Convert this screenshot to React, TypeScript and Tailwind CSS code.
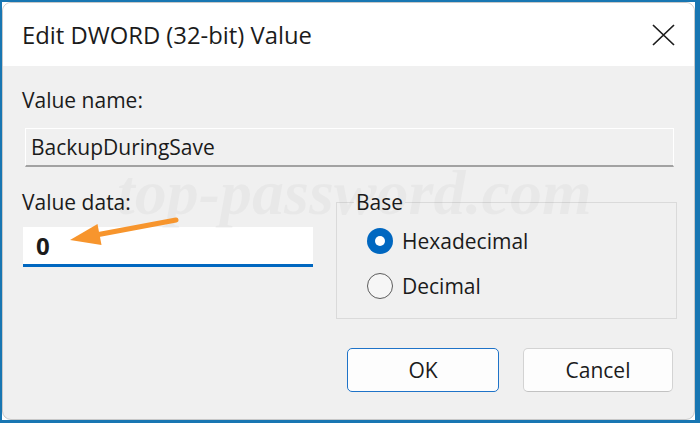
export default function App() {
  return (
    <div className="w-[700px] h-[423px] bg-[#1876b2] pt-[2px] pl-[2px] pr-[5px] pb-[3px] font-['Segoe_UI','Open_Sans',sans-serif] text-[#1b1b1b]">
      <div className="h-full bg-white">
        <div className="relative h-full rounded-[9px] border border-[#c8c8c8] bg-[#f0f0f0] overflow-hidden flex flex-col">
          {/* title bar */}
          <div className="h-[63px] shrink-0 bg-white flex items-center justify-between pl-[19px] pr-[19px]">
            <span className="text-[23.8px] leading-[30px]">Edit DWORD (32-bit) Value</span>
            <svg width="23" height="22" viewBox="0 0 23 22" className="mt-[1px]">
              <path d="M1 1 L22 21 M22 1 L1 21" stroke="#1c1c1c" strokeWidth="1.7" fill="none" />
            </svg>
          </div>

          <div className="flex-1 flex flex-col pl-[19px] pr-[20px] text-[21px] leading-[28px]">
            <div className="mt-[20px]">Value name:</div>
            <div className="mt-[14px] ml-[3px] h-[39px] border border-white border-b-2 border-b-[#a2a2a2] flex items-center pl-[5px]">
              BackupDuringSave
            </div>

            <div className="mt-[21px] flex">
              <div className="w-[291px] flex flex-col">
                <div>Value data:</div>
                <div className="mt-[11px] ml-[1px] h-[40px] bg-white border-b-[3px] border-b-[#0067c0] flex items-center pl-[13px]">
                  <span className="font-bold text-[24px]">0</span>
                </div>
              </div>

              <fieldset className="ml-[23px] mr-[-3px] flex-1 h-[131px] border border-[#dadada] pl-[17px] pt-[10px]">
                <legend className="px-[2px]">Base</legend>
                <div className="flex flex-col gap-[15px] ml-[13px]">
                  <div className="flex items-center h-[30px]">
                    <span className="w-[26px] h-[26px] rounded-full bg-[#0067c0] flex items-center justify-center">
                      <span className="w-[10px] h-[10px] rounded-full bg-white" />
                    </span>
                    <span className="ml-[9px]">Hexadecimal</span>
                  </div>
                  <div className="flex items-center h-[30px]">
                    <span className="w-[26px] h-[26px] rounded-full border-[1.5px] border-[#5c5c5c] bg-[#f6f6f6]" />
                    <span className="ml-[9px]">Decimal</span>
                  </div>
                </div>
              </fieldset>
            </div>

            <div className="mt-[29px] flex justify-end gap-[24px] pr-[1px]">
              <button className="w-[152px] h-[44px] rounded-[5px] border-[1.5px] border-[#1f73c8] bg-[#fdfdfd] text-[21px]">
                OK
              </button>
              <button className="w-[150px] h-[44px] rounded-[5px] border border-[#d3d3d3] border-b-[#c2c2c2] bg-[#fdfdfd] text-[21px]">
                Cancel
              </button>
            </div>
          </div>

          {/* watermark */}
          <span className="pointer-events-none absolute left-[114px] top-[154px] font-['Liberation_Serif',serif] font-bold italic text-[64px] leading-[72px] text-black/[0.03]">
            top-password.com
          </span>

          {/* annotation arrow */}
          <svg className="pointer-events-none absolute left-0 top-0" width="691" height="415" viewBox="3 3 691 415">
            <line x1="176" y1="220" x2="96" y2="235" stroke="#f7952d" strokeWidth="5" strokeLinecap="round" />
            <polygon points="70,240 97.5,224 101.5,245" fill="#f7952d" />
          </svg>
        </div>
      </div>
    </div>
  )
}
